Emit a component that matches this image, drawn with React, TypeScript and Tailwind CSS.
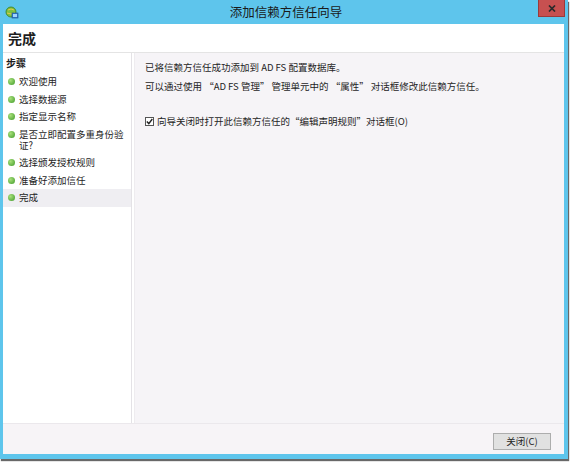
import React from 'react';

const steps = [
  '欢迎使用',
  '选择数据源',
  '指定显示名称',
  '是否立即配置多重身份验证?',
  '选择颁发授权规则',
  '准备好添加信任',
  '完成',
];

function WindowIcon() {
  return (
    <svg width="14" height="14" viewBox="0 0 14 14">
      <circle cx="6" cy="6" r="5" fill="#7cc242" stroke="#3d7a1e" strokeWidth="0.8" />
      <path d="M3 4 Q6 2 9 4 M2 7 Q6 9 10 7" stroke="#e6c84a" strokeWidth="1" fill="none" />
      <rect x="7" y="7" width="6" height="5" fill="#2f7fd0" stroke="#1b4f8a" strokeWidth="0.6" />
      <rect x="8" y="8" width="4" height="3" fill="#9fd3ff" />
    </svg>
  );
}

function Bullet() {
  return (
    <span className="inline-block w-[7px] h-[7px] rounded-full bg-[radial-gradient(circle_at_35%_35%,#a8e07a,#3f9a2a)] shrink-0 mt-[2px]" />
  );
}

export default function App() {
  return (
    <div
      className="w-[571px] h-[464px] bg-white"
      style={{ fontFamily: '"Noto Sans CJK SC", "Noto Sans", sans-serif' }}
    >
      <div className="relative w-[568px] h-[459px] bg-[#5ec5ec] flex flex-col shadow-[1px_2px_1px_rgba(40,40,40,0.7)]">
        {/* title bar */}
        <div className="h-[24px] flex items-center relative shrink-0">
          <div className="pl-[5px] pt-[1px]">
            <WindowIcon />
          </div>
          <div className="absolute inset-x-0 top-0 h-[24px] flex items-center justify-center text-[12.5px] text-[#1a1a1a] pl-[4px]">
            添加信赖方信任向导
          </div>
          <div className="absolute right-[3px] top-0 w-[27px] h-[17px] bg-[#c75050] border border-[#9b3a3a] border-t-0 flex items-center justify-center">
            <svg width="8" height="7" viewBox="0 0 8 7">
              <path d="M1 0.5 L7 6.5 M7 0.5 L1 6.5" stroke="#2a2a2a" strokeWidth="1.7" />
            </svg>
          </div>
        </div>

        {/* client area */}
        <div className="flex-1 ml-[3px] mr-[4px] mb-[5px] bg-white flex flex-col text-[#1e1e1e]">
          <div className="h-[29px] shrink-0 flex items-center pl-[5px] border-b border-[#e4e4e4]">
            <span className="text-[14px] font-bold leading-none">完成</span>
          </div>

          <div className="flex-1 flex min-h-0">
            <div className="w-[129px] bg-white border-r border-[#e4e2e6] pt-[3px] pr-[6px]">
              <div className="pl-[3px] text-[10px] font-bold leading-[14px] h-[14px] mb-[3px]">步骤</div>
              {steps.map((s, i) => (
                <div
                  key={s}
                  className={`flex items-start gap-[4px] pl-[5px] py-[3.25px] text-[9.5px] leading-[11px] ${
                    i === steps.length - 1 ? 'bg-[#efeef2] -mr-[6px]' : ''
                  }`}
                >
                  <Bullet />
                  <span>{s}</span>
                </div>
              ))}
            </div>

            <div className="flex-1 bg-[#f6f4f7] ml-[2px] border-l border-[#eeecef] pl-[10px] pt-[5px] text-[9.5px]">
              <div className="leading-[19px]">已将信赖方信任成功添加到 AD FS 配置数据库。</div>
              <div className="leading-[19px]">可以通过使用 “AD FS 管理” 管理单元中的 “属性” 对话框修改此信赖方信任。</div>
              <div className="flex items-center gap-[3px] mt-[16px]">
                <span className="w-[9px] h-[9px] border border-[#555] bg-white flex items-center justify-center">
                  <svg width="7" height="7" viewBox="0 0 7 7">
                    <path d="M0.8 3.6 L2.8 5.6 L6.3 1" stroke="#222" strokeWidth="1.4" fill="none" />
                  </svg>
                </span>
                <span className="leading-[19px]">向导关闭时打开此信赖方信任的“编辑声明规则”对话框(O)</span>
              </div>
            </div>
          </div>

          <div className="h-[31px] shrink-0 bg-[#f7f4f7] border-t border-[#ebe8ec] flex justify-end items-start pt-[9px] pr-[13px]">
            <div className="w-[58px] h-[17px] bg-[#e1e1e1] border border-[#adadad] flex items-center justify-center text-[9.5px] leading-none">
              关闭(C)
            </div>
          </div>
        </div>
      </div>
    </div>
  );
}
